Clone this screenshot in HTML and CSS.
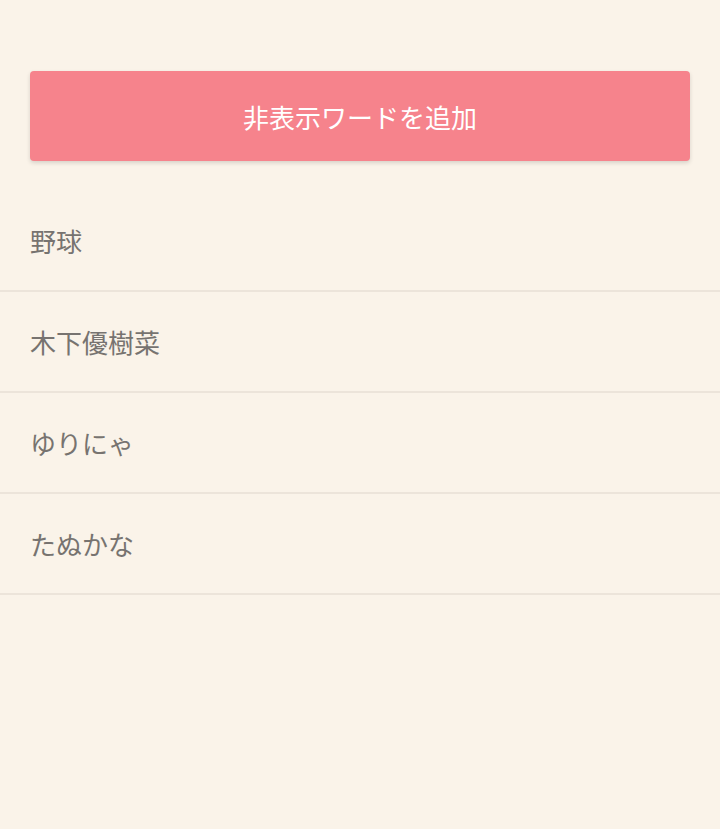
FILE: index.html
```html
<!DOCTYPE html>
<html lang="ja">
<head>
<meta charset="utf-8">
<link rel="stylesheet" href="styles.css">
</head>
<body>
<div class="page">
  <div class="btn-wrap">
    <button class="add-btn">非表示ワードを追加</button>
  </div>
  <ul class="word-list">
    <li class="word">野球</li>
    <li class="word">木下優樹菜</li>
    <li class="word">ゆりにゃ</li>
    <li class="word">たぬかな</li>
  </ul>
</div>
</body>
</html>
```
FILE: styles.css
```css
html, body {
  margin: 0;
  padding: 0;
  background: #faf3e9;
  font-family: "Noto Sans CJK JP", "Noto Sans", sans-serif;
}
.page {
  padding-top: 71px;
}
.btn-wrap {
  padding: 0 30px;
}
.add-btn {
  display: block;
  width: 100%;
  height: 90px;
  border: none;
  border-radius: 4px;
  background: #f6838c;
  color: #ffffff;
  font-family: inherit;
  font-size: 26px;
  box-shadow: 0 2px 4px rgba(0, 0, 0, 0.14);
  padding: 1px 0 0;
}
.word-list {
  list-style: none;
  margin: 30px 0 0;
  padding: 0;
}
.word {
  height: 99px;
  display: flex;
  align-items: center;
  padding: 0 30px;
  border-bottom: 2px solid #ece4da;
  color: #777370;
  font-size: 26px;
}
```
